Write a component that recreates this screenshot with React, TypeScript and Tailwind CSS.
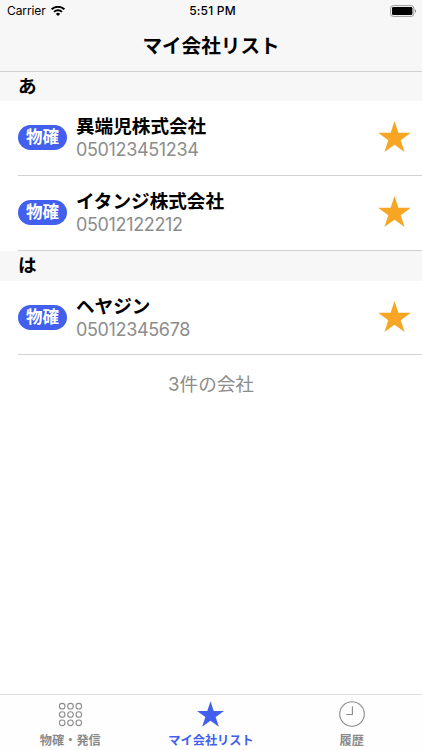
import React from "react";

interface Company {
  name: string;
  phone: string;
}

interface Section {
  id: string;
  label: string;
  companies: Company[];
}

const sections: Section[] = [
  {
    id: "a",
    label: "あ",
    companies: [
      { name: "異端児株式会社", phone: "050123451234" },
      { name: "イタンジ株式会社", phone: "05012122212" },
    ],
  },
  {
    id: "ha",
    label: "は",
    companies: [{ name: "ヘヤジン", phone: "05012345678" }],
  },
];

const Star: React.FC<{ className?: string }> = ({ className }) => (
  <svg viewBox="0 0 32 30.4" className={className} fill="currentColor">
    <path d="M16 0 19.8 11.6H32L22.1 18.8 25.9 30.4 16 23.2 6.1 30.4 9.9 18.8 0 11.6H12.2Z" />
  </svg>
);

const Wifi = () => (
  <svg viewBox="0 0 14 10" className="w-[14px] h-[10px]" fill="none" stroke="#000">
    <path d="M.6 3.4a9.2 9.2 0 0 1 12.8 0" strokeWidth="2" />
    <path d="M3 5.9a5.7 5.7 0 0 1 8 0" strokeWidth="1.8" />
    <path d="M7 10 4.9 7.9a3 3 0 0 1 4.2 0Z" fill="#000" stroke="none" />
  </svg>
);

const Battery = () => (
  <svg viewBox="0 0 27 12" className="w-[27px] h-[12px]">
    <rect x=".6" y=".6" width="23.2" height="10.8" rx="2.6" fill="none" stroke="#9a9a9a" strokeWidth="1" />
    <rect x="2" y="2" width="20.4" height="8" rx="1.2" />
    <path d="M25 4.2c1.5.5 1.5 3.1 0 3.6Z" fill="#8c8c8c" />
  </svg>
);

const Keypad = () => (
  <svg viewBox="0 0 25 25" className="w-[25px] h-[25px]" fill="none" stroke="#8b8b8b" strokeWidth="1.1">
    {[4.2, 12.5, 20.8].map((y) =>
      [4.2, 12.5, 20.8].map((x) => <circle key={`${x}-${y}`} cx={x} cy={y} r="2.8" />)
    )}
  </svg>
);

const Clock = () => (
  <svg viewBox="0 0 26 26" className="w-[26px] h-[26px]" fill="none" stroke="#8b8b8b" strokeWidth="1.1">
    <circle cx="13" cy="13" r="12.3" />
    <path d="M13.4 5.2v8.3H7.2" />
  </svg>
);

const CompanyRow: React.FC<{ company: Company }> = ({ company }) => (
  <li className="ml-[18px] flex h-[75px] items-center border-b border-[#d2d2d4] pb-[2px] only:h-[74px] only:pb-px">
    <span className="flex h-[25px] w-[49px] items-center justify-center rounded-full bg-[#425fee] text-[16.5px] font-bold leading-none text-white">
      物確
    </span>
    <div className="ml-[9px] flex-1 pt-px">
      <p className="text-[18.6px] font-bold leading-6 text-black">{company.name}</p>
      <p className="text-[18px] leading-6 tracking-[-0.35px] text-[#8c8c8c]">{company.phone}</p>
    </div>
    <Star className="mr-[11px] mb-px h-[31px] w-[33px] text-[#f6a623]" />
  </li>
);

const App: React.FC = () => {
  return (
    <div className="flex h-[750px] w-[422px] flex-col overflow-hidden bg-white font-['Inter','Noto_Sans_CJK_JP',sans-serif]">
      <header className="h-[72px] border-b border-[#d0d0d2] bg-[#f7f7f7] text-black">
        <div className="grid h-[22px] grid-cols-3 items-center pl-[7px] pr-[5px] text-[12px]">
          <div className="flex items-center gap-[5px]">
            <span className="tracking-[-0.1px]">Carrier</span>
            <Wifi />
          </div>
          <span className="pl-px text-center font-medium tracking-[0.2px]">5:51 PM</span>
          <div className="flex justify-end">
            <Battery />
          </div>
        </div>
        <h1 className="flex h-[49px] items-center justify-center text-[19.6px] font-bold">
          マイ会社リスト
        </h1>
      </header>

      <main className="flex-1">
        {sections.map((section) => (
          <section key={section.id} className="group">
            <h2 className="flex h-[30px] items-center bg-[#f7f7f7] pb-px pl-[18px] text-[18.6px] font-bold leading-none text-black group-first:h-[29px]">
              {section.label}
            </h2>
            <ul>
              {section.companies.map((company) => (
                <CompanyRow key={company.phone} company={company} />
              ))}
            </ul>
          </section>
        ))}
        <p className="pt-[15px] text-center text-[18.6px] leading-7 text-[#8c8c8c]">3件の会社</p>
      </main>

      <nav className="grid h-[56px] grid-cols-3 border-t border-[#dedede] bg-[#fefefe] text-[12.2px] font-bold text-[#8b8b8b]">
        <div className="flex flex-col items-center">
          <div className="flex h-[38px] items-center">
            <Keypad />
          </div>
          <span className="leading-4">物確・発信</span>
        </div>
        <div className="flex flex-col items-center text-[#425fee]">
          <div className="flex h-[38px] items-center">
            <Star className="h-[26px] w-[27px]" />
          </div>
          <span className="leading-4">マイ会社リスト</span>
        </div>
        <div className="flex flex-col items-center">
          <div className="flex h-[38px] items-center">
            <Clock />
          </div>
          <span className="leading-4">履歴</span>
        </div>
      </nav>
    </div>
  );
};

export default App;
